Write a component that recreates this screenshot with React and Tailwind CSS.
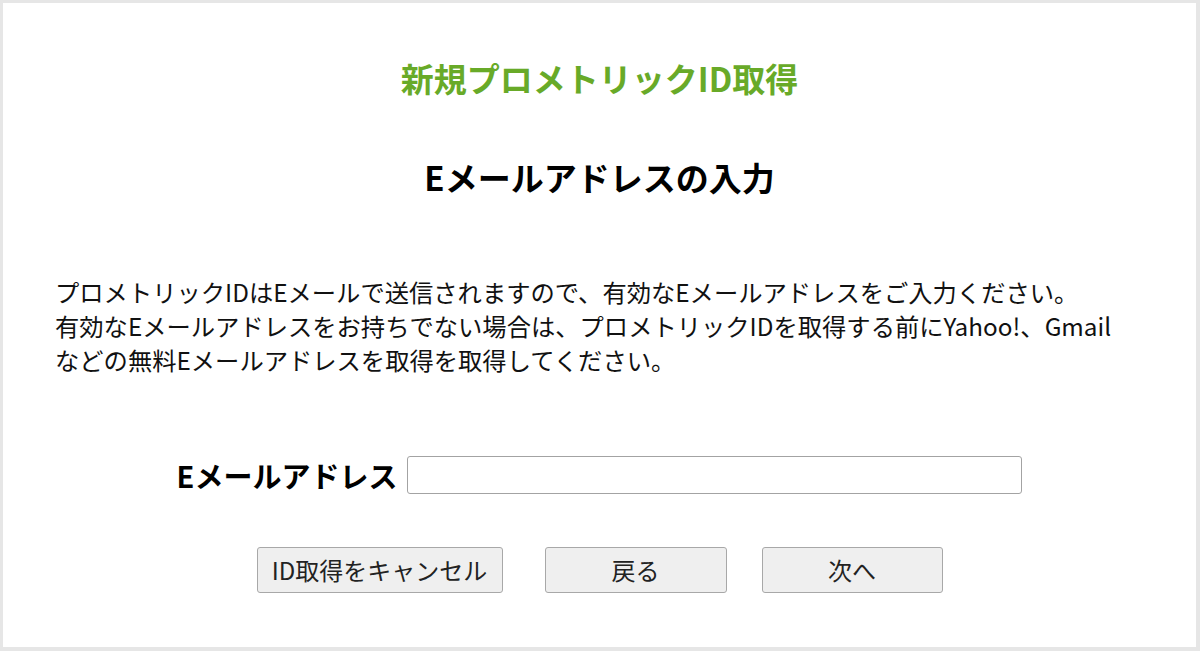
import React from 'react';

const font = { fontFamily: '"Noto Sans CJK JP", "Noto Sans", sans-serif' };

const buttons = [
  { label: 'ID取得をキャンセル', width: 'w-[246px]' },
  { label: '戻る', width: 'w-[182px]' },
  { label: '次へ', width: 'w-[181px]' },
];

const App = () => {
  return (
    <div
      className="w-[1200px] h-[651px] bg-white border-t-[3px] border-l-[3px] border-r-4 border-b-4 border-[#e6e6e6] flex flex-col"
      style={font}
    >
      <h1 className="mt-[55px] text-center text-[33px] leading-[40px] font-bold text-[#68aa28]">
        新規プロメトリックID取得
      </h1>
      <h2 className="mt-[59px] text-center text-[33px] leading-[40px] font-bold text-black">
        Eメールアドレスの入力
      </h2>
      <p className="mt-[78px] pl-[52px] text-[24.3px] leading-[34px] text-[#111]">
        プロメトリックIDはEメールで送信されますので、有効なEメールアドレスをご入力ください。
        <br />
        有効なEメールアドレスをお持ちでない場合は、プロメトリックIDを取得する前にYahoo!、Gmail
        <br />
        などの無料Eメールアドレスを取得を取得してください。
      </p>

      {/* email row */}
      <div className="mt-[79px] flex items-center justify-center gap-[10px]">
        <label className="text-[29px] leading-[38px] font-bold text-black">Eメールアドレス</label>
        <input
          type="text"
          className="w-[615px] h-[38px] border border-[#a3a3a3] rounded-[3px] bg-white px-2 text-[20px] outline-none"
        />
      </div>

      <div className="mt-[53px] flex justify-center items-center">
        {buttons.map((b, i) => (
          <button
            key={b.label}
            type="button"
            className={`${b.width} h-[46px] bg-[#efefef] border border-[#a8a8a8] rounded-[3px] text-[24px] leading-none text-[#222] ${i === 1 ? 'ml-[42px]' : ''} ${i === 2 ? 'ml-[35px]' : ''}`}
          >
            {b.label}
          </button>
        ))}
      </div>
    </div>
  );
};

export default App;
